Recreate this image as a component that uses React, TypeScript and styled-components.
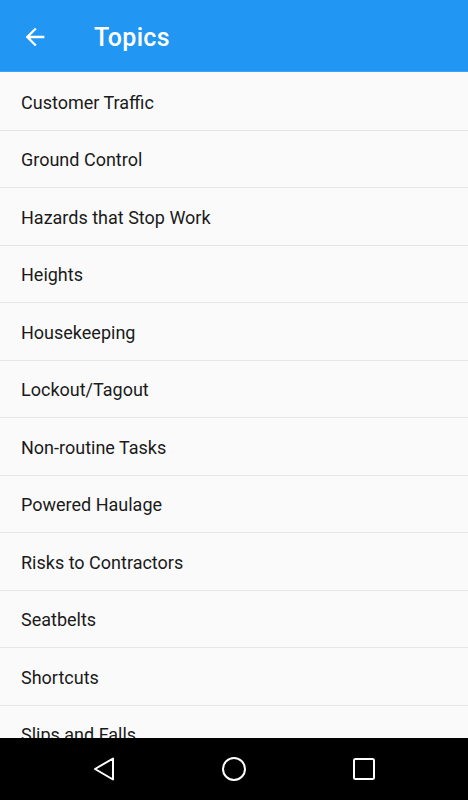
import { ReactElement } from 'react';
import styled, { createGlobalStyle } from 'styled-components';

const topics = [
  'Customer Traffic',
  'Ground Control',
  'Hazards that Stop Work',
  'Heights',
  'Housekeeping',
  'Lockout/Tagout',
  'Non-routine Tasks',
  'Powered Haulage',
  'Risks to Contractors',
  'Seatbelts',
  'Shortcuts',
  'Slips and Falls',
  'Working Alone',
];

const App = (): ReactElement => (
  <Screen>
    <GlobalStyle />
    <AppBar>
      <BackButton aria-label="Back">
        <svg width="28" height="28" viewBox="0 0 24 24">
          <path d="M20 11H7.83l5.59-5.59L12 4l-8 8 8 8 1.41-1.41L7.83 13H20v-2z" fill="#fff" />
        </svg>
      </BackButton>
      <Title>Topics</Title>
    </AppBar>
    <List>
      {topics.map((topic) => (
        <Row key={topic}>{topic}</Row>
      ))}
    </List>
    <NavBar>
      <NavButton aria-label="Back">
        <svg width="24" height="24" viewBox="0 0 24 24">
          <path
            d="M21 1.5 L21 22.5 L3 12 Z"
            fill="none"
            stroke="#fff"
            strokeWidth="2"
            strokeLinejoin="round"
          />
        </svg>
      </NavButton>
      <NavButton aria-label="Home">
        <svg width="26" height="26" viewBox="0 0 26 26">
          <circle cx="13" cy="13" r="11" fill="none" stroke="#fff" strokeWidth="2" />
        </svg>
      </NavButton>
      <NavButton aria-label="Recent apps">
        <svg width="24" height="24" viewBox="0 0 24 24">
          <rect x="2" y="2" width="20" height="20" rx="1.5" fill="none" stroke="#fff" strokeWidth="2" />
        </svg>
      </NavButton>
    </NavBar>
  </Screen>
);

const GlobalStyle = createGlobalStyle`
  html, body {
    margin: 0;
    padding: 0;
    background: #fafafa;
  }
  body {
    font-family: Roboto, "Noto Sans", "Liberation Sans", sans-serif;
  }
`;

const Screen = styled.div`
  display: flex;
  flex-direction: column;
  width: 468px;
  height: 800px;
  overflow: hidden;
  background: #fafafa;
`;

const AppBar = styled.header`
  display: flex;
  align-items: center;
  flex: 0 0 72px;
  height: 72px;
  padding: 3px 0 0 21px;
  box-sizing: border-box;
  background: #2196f3;
  border-bottom: 1px solid #3ea2f4;
`;

const BackButton = styled.button`
  display: flex;
  align-items: center;
  justify-content: center;
  width: 28px;
  height: 28px;
  padding: 0;
  border: none;
  background: none;
  margin-right: 45px;
  cursor: pointer;
`;

const Title = styled.h1`
  margin: 0;
  color: #fff;
  font-size: 25px;
  font-weight: 500;
  letter-spacing: 0.3px;
`;

const List = styled.ul`
  flex: 1;
  margin: 0;
  padding: 1px 0 0;
  list-style: none;
  overflow: hidden;
`;

const Row = styled.li`
  display: flex;
  align-items: center;
  height: 57.5px;
  padding: 2px 21px 0;
  box-sizing: border-box;
  border-bottom: 1px solid #e6e6e6;
  color: #1a1a1a;
  font-size: 18px;
`;

const NavBar = styled.nav`
  display: flex;
  align-items: center;
  justify-content: space-between;
  flex: 0 0 62px;
  padding: 0 80px;
  background: #000;
`;

const NavButton = styled.button`
  display: flex;
  align-items: center;
  justify-content: center;
  width: 48px;
  height: 48px;
  padding: 0;
  border: none;
  background: none;
  cursor: pointer;
`;

export default App;
